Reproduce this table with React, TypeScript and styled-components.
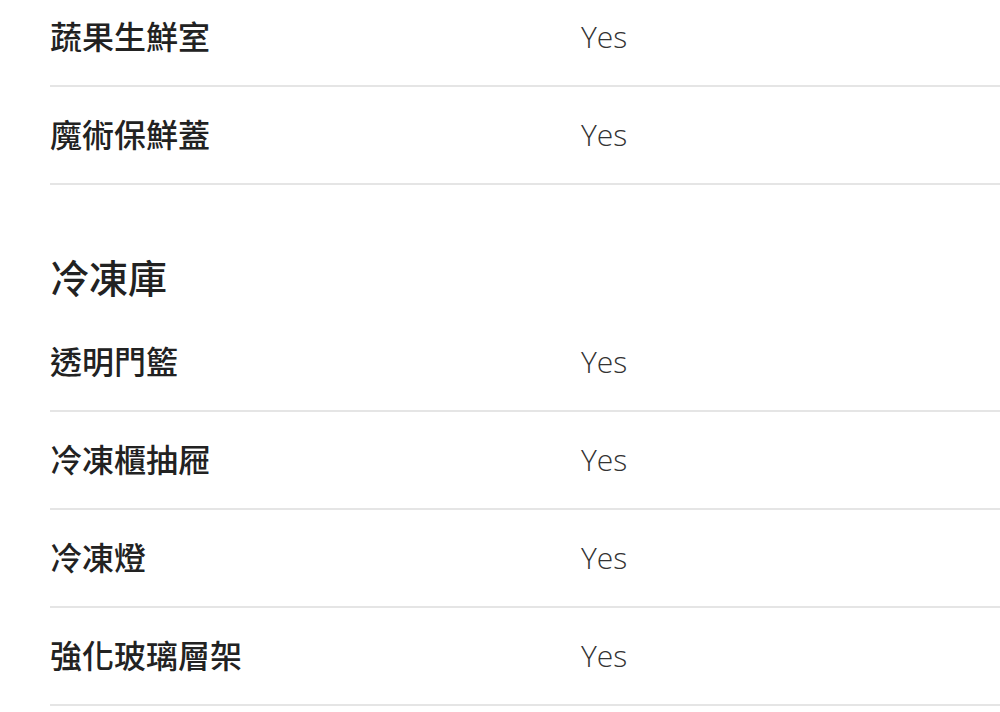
import React from "react";
import styled, { createGlobalStyle } from "styled-components";

const Global = createGlobalStyle`
  html, body { margin: 0; padding: 0; background: #fff; overflow: hidden; }
  body { font-family: "Noto Sans CJK TC", "Noto Sans", sans-serif; color: #222; }
`;

const Page = styled.div`
  width: 1000px;
  height: 712px;
  overflow: hidden;
`;

const Content = styled.div`
  margin-top: -11px;
  padding-left: 50px;
`;

const Section = styled.section`
  display: flex;
  flex-direction: column;
`;

const Heading = styled.h3`
  margin: 0;
  height: 129px;
  display: flex;
  align-items: flex-end;
  padding-bottom: 18px;
  box-sizing: border-box;
  font-family: "Noto Sans CJK TC", sans-serif;
  font-weight: 500;
  font-size: 39px;
  line-height: 1;
  color: #222;
`;

const Row = styled.div`
  display: grid;
  grid-template-columns: 531px 1fr;
  align-items: center;
  height: 98px;
  box-sizing: border-box;
  border-bottom: 2px solid #e5e5e5;
`;

const Label = styled.div`
  font-family: "Noto Sans CJK TC", sans-serif;
  font-weight: 500;
  font-size: 32px;
  line-height: 1;
  padding-bottom: 4px;
  color: #222;
`;

const Value = styled.div`
  font-family: "Open Sans", "Noto Sans", sans-serif;
  font-weight: 300;
  font-size: 30px;
  line-height: 1;
  color: #333;
`;

const sections: { title?: string; rows: [string, string][] }[] = [
  {
    rows: [
      ["蔬果生鮮室", "Yes"],
      ["魔術保鮮蓋", "Yes"],
    ],
  },
  {
    title: "冷凍庫",
    rows: [
      ["透明門籃", "Yes"],
      ["冷凍櫃抽屜", "Yes"],
      ["冷凍燈", "Yes"],
      ["強化玻璃層架", "Yes"],
    ],
  },
];

export default function App() {
  return (
    <Page>
      <Global />
      <Content>
        {sections.map((s, i) => (
          <Section key={i}>
            {s.title && <Heading>{s.title}</Heading>}
            {s.rows.map(([k, v]) => (
              <Row key={k}>
                <Label>{k}</Label>
                <Value>{v}</Value>
              </Row>
            ))}
          </Section>
        ))}
      </Content>
    </Page>
  );
}
